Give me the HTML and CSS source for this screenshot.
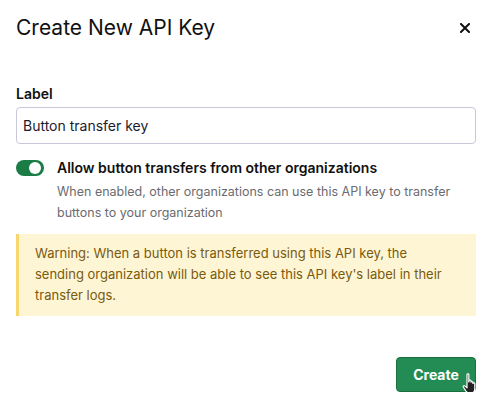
FILE: index.html
```html
<!DOCTYPE html>
<html lang="en">
<head>
    <meta charset="UTF-8">
    <title>Create New API Key</title>

    <link rel="stylesheet" href="styles.css">
</head>
<body>
    <div class="modal">
        <div class="modalHeader">
            <h2 class="modalTitle">Create New API Key</h2>
            <button class="closeBtn" type="button" aria-label="Close">
                <svg width="10" height="10" viewBox="0 0 10 10">
                    <path d="M1 1 L9 9 M9 1 L1 9" stroke="#111" stroke-width="2" stroke-linecap="square"/>
                </svg>
            </button>
        </div>

        <form class="keyForm">
            <label class="fieldLabel" for="label">Label</label>
            <input class="textInput" type="text" id="label" name="label" value="Button transfer key">

            <div class="toggleRow">
                <span class="toggle"><span class="knob"></span></span>
                <div class="toggleText">
                    <div class="toggleTitle">Allow button transfers from other organizations</div>
                    <div class="toggleHelp">When enabled, other organizations can use this API key to transfer buttons to your organization</div>
                </div>
            </div>

            <div class="warning">
                Warning: When a button is transferred using this API key, the sending organization will be able to see this API key's label in their transfer logs.
            </div>

            <div class="actions">
                <button class="createBtn" type="submit">Create</button>
                <!-- mouse pointer sitting over the button -->
                <svg class="pointer" width="18" height="22" viewBox="0 0 18 22">
                    <path d="M5 1.5 C5 0.7 6.8 0.7 6.8 1.5 L6.8 9 L7.2 7.6 C7.4 6.8 9 6.8 9 7.8 L9 9.2 C9.2 8.4 10.9 8.4 10.9 9.4 L10.9 10.4 C11.2 9.7 12.8 9.8 12.8 10.8 L12.8 15.5 C12.8 18 11.5 20 9.2 20 L7.2 20 C5.6 20 4.8 19.2 3.8 17.8 L1.3 14 C0.8 13.2 1.8 12.2 2.7 12.9 L5 14.8 Z" fill="#222" stroke="#fff" stroke-width="1.2" stroke-linejoin="round"/>
                </svg>
            </div>
        </form>
    </div>
</body>
</html>
```

FILE: styles.css
```css
* {
    box-sizing: border-box;
}

body {
    font-family: "Inter", "Noto Sans", sans-serif;
    margin: 0;
    background: #fff;
    color: #1a1a1a;
}

.modal {
    width: 494px;
    padding: 0 18px 0 16px;
}

.modalHeader {
    display: flex;
    align-items: center;
    justify-content: space-between;
    padding-top: 14px;
    height: 42px;
}

.modalTitle {
    margin: 0;
    font-size: 21px;
    font-weight: 400;
    line-height: 28px;
    color: #111;
}

.closeBtn {
    border: none;
    background: none;
    padding: 0;
    margin-right: 6px;
    margin-top: -1px;
    display: flex;
    cursor: pointer;
}

.keyForm {
    display: flex;
    flex-direction: column;
    padding-top: 42px;
}

.fieldLabel {
    font-size: 14px;
    font-weight: 600;
    line-height: 20px;
    color: #111;
}

.textInput {
    margin-top: 3px;
    height: 37px;
    border: 1px solid #c9c7da;
    border-radius: 4px;
    padding: 0 6px;
    font-family: "Inter", "Noto Sans", sans-serif;
    font-size: 14px;
    color: #1a1a2e;
}

.toggleRow {
    display: flex;
    gap: 13px;
    margin-top: 15px;
}

.toggle {
    position: relative;
    flex: none;
    width: 28px;
    height: 16px;
    border-radius: 8px;
    background: #1b7d45;
    margin-top: 1px;
}

.knob {
    position: absolute;
    top: 2px;
    right: 3px;
    width: 12px;
    height: 12px;
    border-radius: 50%;
    background: #fff;
}

.toggleTitle {
    font-size: 14px;
    font-weight: 600;
    line-height: 18px;
    color: #111;
}

.toggleHelp {
    margin-top: 4px;
    font-size: 12.5px;
    line-height: 21px;
    color: #6b6b70;
}

.warning {
    margin-top: 11px;
    background: #fef5d5;
    border-left: 3px solid #f8d66f;
    padding: 9px 28px 10px 16px;
    font-size: 13px;
    line-height: 21px;
    color: #7a5a0c;
}

.actions {
    position: relative;
    display: flex;
    justify-content: flex-end;
    margin-top: 41px;
}

.createBtn {
    width: 80px;
    height: 35px;
    background: #238c55;
    border: 1px solid #1a6e40;
    border-radius: 4px;
    color: #fff;
    font-family: "Inter", "Noto Sans", sans-serif;
    font-size: 14px;
    font-weight: 700;
    cursor: pointer;
}

.pointer {
    position: absolute;
    right: -4px;
    top: 16px;
}
```
